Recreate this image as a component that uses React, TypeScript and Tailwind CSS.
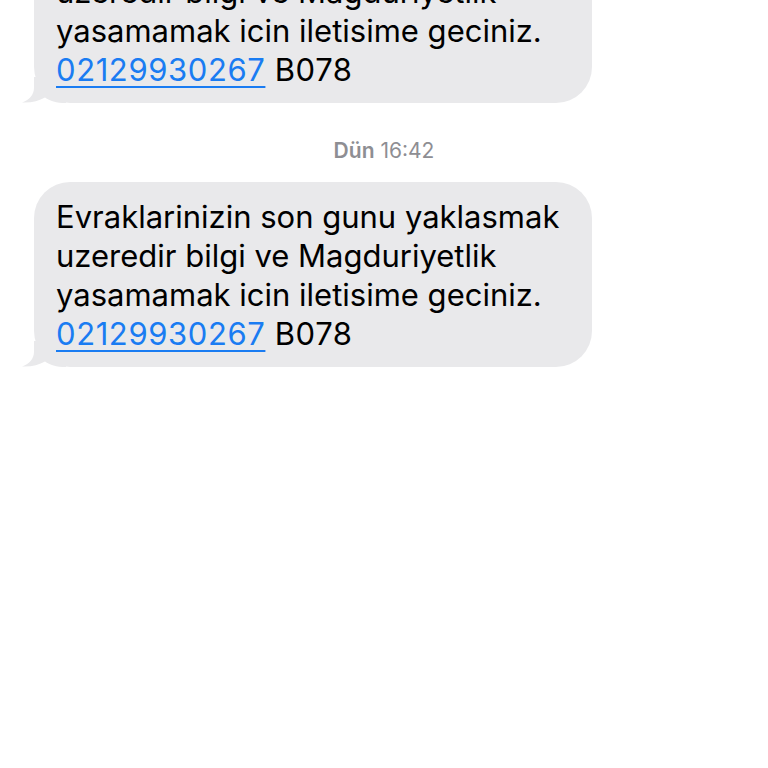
import React from 'react';

const lines = [
  'Evraklarinizin son gunu yaklasmak',
  'uzeredir bilgi ve Magduriyetlik',
  'yasamamak icin iletisime geciniz.',
];

function Tail() {
  return (
    <svg
      className="absolute bottom-0 left-[-12px]"
      width="44"
      height="26"
      viewBox="0 0 44 26"
    >
      <path
        d="M12 0 L12 11 C12 18 7 23 0 25.5 C9 26 17 24 23 20.5 C28 24 34 26 44 26 L44 0 Z"
        fill="#e9e9eb"
      />
    </svg>
  );
}

function Bubble() {
  return (
    <div className="relative ml-[34px] w-[558px] rounded-[36px] bg-[#e9e9eb] pt-[15px] pb-[14px] pl-[22px] text-[31px] leading-[39px] text-black">
      <Tail />
      <div className="relative">
        {lines.map((l) => (
          <div key={l}>{l}</div>
        ))}
        <div className="tracking-[0.6px]">
          <span className="text-[#1a7cf2] underline decoration-[2px] underline-offset-[5px]">
            02129930267
          </span>{' '}
          B078
        </div>
      </div>
    </div>
  );
}

export default function App() {
  return (
    <div
      className="h-[768px] w-[768px] overflow-hidden bg-white"
      style={{ fontFamily: 'Inter, "Liberation Sans", sans-serif' }}
    >
      <div className="mt-[-82px] flex flex-col">
        <Bubble />
        <div className="mt-[38px] mb-[21px] text-center text-[21px] leading-[20px] text-[#8e8e93]">
          <span className="font-semibold">Dün</span> 16:42
        </div>
        <Bubble />
      </div>
    </div>
  );
}
